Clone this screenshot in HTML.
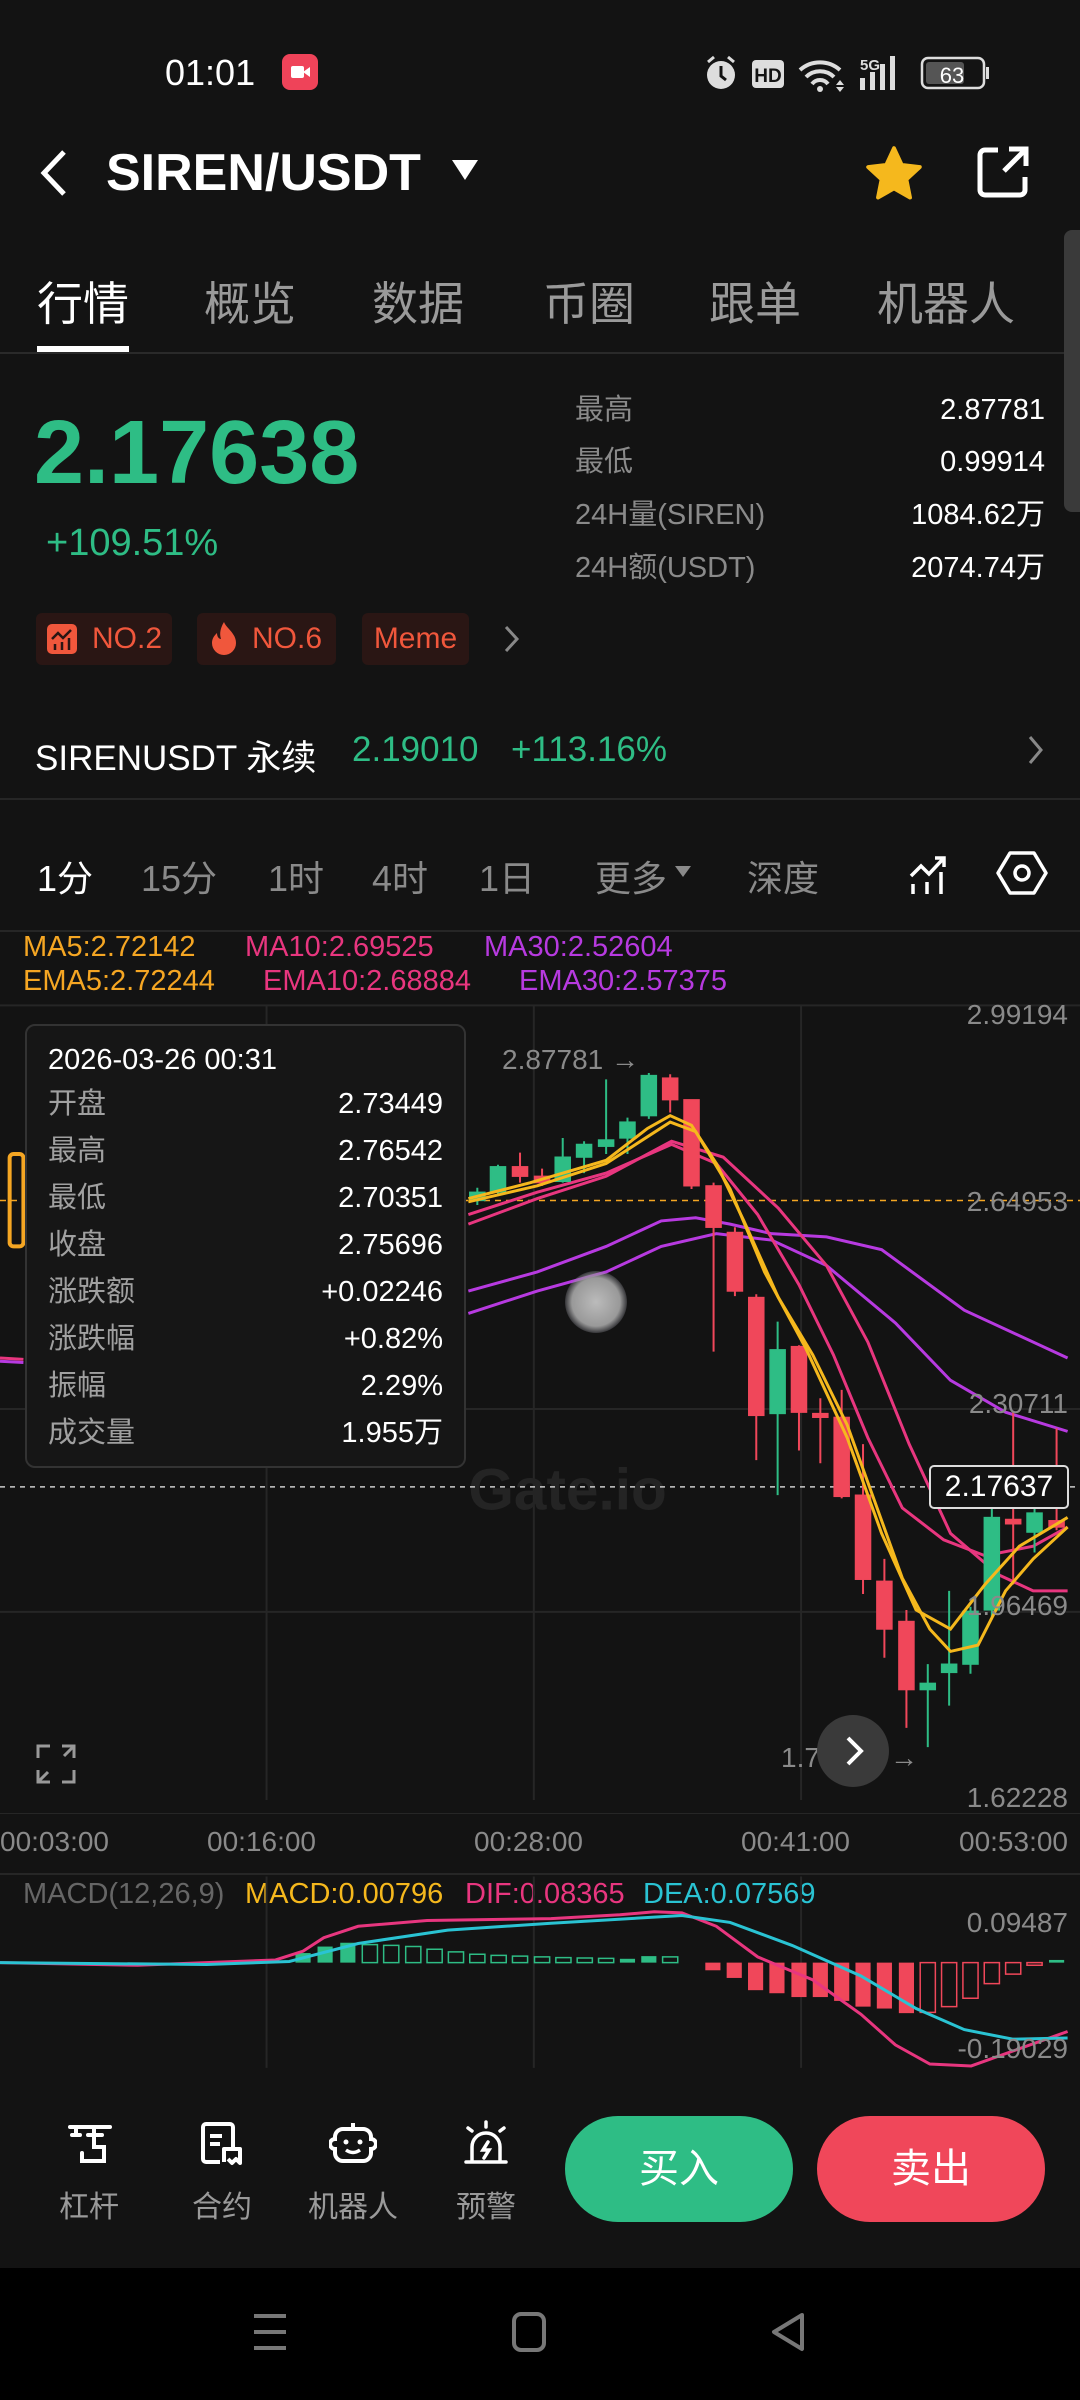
<!DOCTYPE html>
<html><head><meta charset="utf-8">
<style>
*{margin:0;padding:0;box-sizing:border-box}
body{width:1080px;height:2400px;background:#131313;position:relative;overflow:hidden;font-family:"Liberation Sans","Noto Sans CJK SC",sans-serif;color:#fff}
.a{position:absolute;white-space:nowrap}
.g{color:#2ebd85}.gr{color:#8a8a8a}
.tab{position:absolute;top:268px;font-size:46px;color:#9a9a9a}
.lab{position:absolute;left:575px;font-size:29px;color:#8a8a8a;line-height:36px}
.val{position:absolute;right:35px;font-size:29px;color:#fff;text-align:right;line-height:36px}
.tag{position:absolute;top:613px;height:52px;background:#2a1614;border-radius:6px;color:#f0573c;font-size:30px;line-height:52px}
.tf{position:absolute;top:850px;font-size:36px;color:#8a8a8a}
.tt{position:absolute;font-size:29px;color:#a0a0a0;line-height:36px}
.tv{position:absolute;right:0;font-size:29px;color:#fff;line-height:36px}
.ax{position:absolute;font-size:28px;color:#8a8a8a}
.bl{position:absolute;top:2182px;font-size:30px;color:#9a9a9a;width:120px;text-align:center}
</style></head><body>
<!-- status -->
<div class="a" style="left:165px;top:52px;font-size:36px">01:01</div>
<div class="a" style="left:282px;top:54px;width:36px;height:36px;background:#ef4359;border-radius:8px"><div style="position:absolute;left:9px;top:12px;width:13px;height:12px;background:#fff;border-radius:2px"></div><div style="position:absolute;left:21px;top:13px;width:0;height:0;border-top:5px solid transparent;border-bottom:5px solid transparent;border-right:7px solid #fff"></div></div>
<svg class="a" style="left:700px;top:54px" width="300" height="38" viewBox="0 0 300 38">
<circle cx="21" cy="21" r="14" fill="#ddd"/><path d="M21 12v10l5 4" stroke="#131313" stroke-width="3" fill="none"/><path d="M8 8l6-5M34 8l-6-5" stroke="#ddd" stroke-width="3"/>
<rect x="52" y="6" width="32" height="28" rx="4" fill="#ddd"/><text x="68" y="28" font-size="19" font-weight="bold" fill="#131313" text-anchor="middle" font-family="Liberation Sans">HD</text>
<path d="M100 16a30 30 0 0 1 40 0M106 23a20 20 0 0 1 28 0M112 30a10 10 0 0 1 16 0" stroke="#ddd" stroke-width="4" fill="none"/><circle cx="120" cy="35" r="3" fill="#ddd"/><path d="M140 26l4 5h-8zM140 38l4-5h-8z" fill="#ddd"/>
<text x="160" y="16" font-size="15" font-weight="bold" fill="#ddd" font-family="Liberation Sans">5G</text>
<rect x="160" y="24" width="5" height="12" fill="#ddd"/><rect x="170" y="18" width="5" height="18" fill="#ddd"/><rect x="180" y="10" width="5" height="26" fill="#ddd"/><rect x="190" y="2" width="5" height="34" fill="#ddd"/>
<rect x="222" y="4" width="62" height="30" rx="6" stroke="#ddd" stroke-width="2.5" fill="none"/><rect x="226" y="8" width="38" height="22" rx="3" fill="#555"/><rect x="286" y="13" width="3" height="12" fill="#ddd"/>
<text x="252" y="29" font-size="22" fill="#fff" text-anchor="middle" font-family="Liberation Sans">63</text></svg>
<!-- header -->
<svg class="a" style="left:36px;top:148px" width="34" height="50"><path d="M28 4L8 25l20 21" stroke="#fff" stroke-width="5" fill="none"/></svg>
<div class="a" style="left:106px;top:143px;font-size:52px;font-weight:bold">SIREN/USDT</div>
<div class="a" style="left:452px;top:160px;width:0;height:0;border-left:13px solid transparent;border-right:13px solid transparent;border-top:20px solid #fff"></div>
<svg class="a" style="left:862px;top:143px" width="64" height="62" viewBox="0 0 24 24"><path d="M12 2l3 6.5 7 .8-5.2 4.8 1.4 7L12 17.6 5.8 21.1l1.4-7L2 9.3l7-.8z" fill="#f5b81d" stroke="#f5b81d" stroke-linejoin="round" stroke-width="1.5"/></svg>
<svg class="a" style="left:976px;top:145px" width="54" height="54" viewBox="0 0 54 54"><path d="M22 5H9a5 5 0 0 0-5 5v35a5 5 0 0 0 5 5h35a5 5 0 0 0 5-5V32" stroke="#fff" stroke-width="5" fill="none"/><path d="M28 26L49 5M33 4h17v17" stroke="#fff" stroke-width="5" fill="none"/></svg>
<!-- tabs -->
<div class="tab" style="left:37px;color:#fff">行情</div>
<div class="tab" style="left:204px">概览</div>
<div class="tab" style="left:372px">数据</div>
<div class="tab" style="left:543px">币圈</div>
<div class="tab" style="left:709px">跟单</div>
<div class="tab" style="left:877px">机器人</div>
<div class="a" style="left:37px;top:346px;width:92px;height:6px;background:#fff"></div>
<div class="a" style="left:0;top:352px;width:1080px;height:2px;background:#2a2a2a"></div>
<div class="a" style="left:1064px;top:230px;width:16px;height:282px;background:#3a3a3a;border-radius:8px 0 0 8px"></div>
<!-- price -->
<div class="a g" style="left:34px;top:402px;font-size:90px;font-weight:bold">2.17638</div>
<div class="a g" style="left:46px;top:522px;font-size:38px">+109.51%</div>
<div class="lab" style="top:392px">最高</div><div class="val" style="top:392px">2.87781</div>
<div class="lab" style="top:444px">最低</div><div class="val" style="top:444px">0.99914</div>
<div class="lab" style="top:497px">24H量(SIREN)</div><div class="val" style="top:497px">1084.62万</div>
<div class="lab" style="top:550px">24H额(USDT)</div><div class="val" style="top:550px">2074.74万</div>
<div class="tag" style="left:36px;width:136px"><svg style="position:absolute;left:11px;top:11px" width="30" height="30" viewBox="0 0 30 30"><rect width="30" height="30" rx="5" fill="#f0573c"/><path d="M5 15l6-6 5 5 8-8M8 20v6M15 18v8M22 14v12" stroke="#2a1614" stroke-width="2.5" fill="none"/></svg><span style="position:absolute;left:56px">NO.2</span></div>
<div class="tag" style="left:197px;width:139px"><svg style="position:absolute;left:14px;top:9px" width="26" height="34" viewBox="0 0 26 34"><path d="M13 0c2 6 12 11 12 21a12 12 0 0 1-24 0c0-5 3-8 5-10 0 4 2 6 4 6-2-6 0-12 3-17z" fill="#f0573c"/></svg><span style="position:absolute;left:55px">NO.6</span></div>
<div class="tag" style="left:362px;width:107px;text-align:center">Meme</div>
<svg class="a" style="left:502px;top:624px" width="20" height="30"><path d="M4 3l11 12L4 27" stroke="#888" stroke-width="3" fill="none"/></svg>
<div class="a" style="left:35px;top:730px;font-size:35px">SIRENUSDT 永续</div>
<div class="a g" style="left:352px;top:730px;font-size:35px">2.19010</div>
<div class="a g" style="left:511px;top:730px;font-size:35px">+113.16%</div>
<svg class="a" style="left:1026px;top:734px" width="20" height="32"><path d="M4 3l11 13L4 29" stroke="#888" stroke-width="3" fill="none"/></svg>
<div class="a" style="left:0;top:798px;width:1080px;height:2px;background:#262626"></div>
<!-- timeframes -->
<div class="tf" style="left:37px;color:#fff">1分</div>
<div class="tf" style="left:141px">15分</div>
<div class="tf" style="left:268px">1时</div>
<div class="tf" style="left:372px">4时</div>
<div class="tf" style="left:479px">1日</div>
<div class="tf" style="left:595px">更多</div>
<div class="a" style="left:675px;top:866px;border-left:8px solid transparent;border-right:8px solid transparent;border-top:11px solid #8a8a8a"></div>
<div class="tf" style="left:747px">深度</div>
<svg class="a" style="left:908px;top:852px" width="44" height="44" viewBox="0 0 44 44"><path d="M3 24l10-10 8 8 14-15M27 6h9v9" stroke="#fff" stroke-width="3.5" fill="none"/><path d="M5 32v10M19 30v12M33 20v22" stroke="#fff" stroke-width="3.5"/></svg>
<svg class="a" style="left:996px;top:850px" width="52" height="46" viewBox="0 0 52 46"><path d="M14 3h24l12 20-12 20H14L2 23z" stroke="#fff" stroke-width="3.5" fill="none" stroke-linejoin="round"/><circle cx="26" cy="23" r="7" stroke="#fff" stroke-width="3.5" fill="none"/></svg>
<div class="a" style="left:0;top:930px;width:1080px;height:2px;background:#262626"></div>
<!-- MA -->
<div class="a" style="left:23px;top:931px;font-size:29px;color:#f5a623">MA5:2.72142</div>
<div class="a" style="left:245px;top:931px;font-size:29px;color:#e8367f">MA10:2.69525</div>
<div class="a" style="left:484px;top:931px;font-size:29px;color:#b73ae0">MA30:2.52604</div>
<div class="a" style="left:23px;top:965px;font-size:29px;color:#f5a623">EMA5:2.72244</div>
<div class="a" style="left:263px;top:965px;font-size:29px;color:#e8367f">EMA10:2.68884</div>
<div class="a" style="left:519px;top:965px;font-size:29px;color:#b73ae0">EMA30:2.57375</div>
<!-- chart -->
<svg class="a" style="left:0;top:800px" width="1080" height="1000" viewBox="0 0 1568 1568" preserveAspectRatio="none">
<path d="M0 322H1568M0 955H1568M0 1273H1568M387 322V1568M775 322V1568M1163 322V1568" stroke="#262626" stroke-width="2" fill="none" vector-effect="non-scaling-stroke"/>
<text x="680" y="1030" font-size="85" font-weight="bold" fill="#242424" font-family="Liberation Sans" transform="scale(1,1.08)">Gate.io</text>
<path d="M0 628H1568" stroke="#f5a623" stroke-width="1.5" stroke-dasharray="6 5" vector-effect="non-scaling-stroke"/>
<path d="M0 1077H1568" stroke="#ccc" stroke-width="1.5" stroke-dasharray="5 5" vector-effect="non-scaling-stroke"/>
<g fill="none">
<path vector-effect="non-scaling-stroke" stroke="#b73ae0" stroke-width="3" d="M680 770L780 740 880 700 960 660 1010 655 1060 665 1120 680 1200 685 1280 705 1400 800 1550 875"/>
<path vector-effect="non-scaling-stroke" stroke="#b73ae0" stroke-width="3" d="M680 805L780 770 880 740 960 700 1040 680 1120 690 1200 730 1300 820 1380 910 1460 960 1550 990"/>
<path vector-effect="non-scaling-stroke" stroke="#e8367f" stroke-width="3" d="M680 650L780 615 880 585 975 540 1040 570 1100 650 1160 760 1210 870 1260 1000 1310 1110 1370 1160 1430 1185 1500 1170 1550 1140"/>
<path vector-effect="non-scaling-stroke" stroke="#e8367f" stroke-width="3" d="M680 665L780 625 880 590 975 535 1050 560 1130 640 1200 730 1260 850 1320 1010 1380 1150 1450 1215 1500 1240 1550 1240"/>
</g>
<g fill="#2ebd85" stroke="#2ebd85" stroke-width="2">
<path vector-effect="non-scaling-stroke" d="M693 608V635M723 572V618M817 530V600M848 535V585M880 438V555M911 498V555M942 428V500M1129 818V1090M1347 1355V1485M1378 1240V1420M1409 1265V1370M1440 1110V1285M1502 1110V1180"/>
<rect x="682" y="615" width="22" height="13"/><rect x="712" y="575" width="22" height="40"/><rect x="806" y="560" width="22" height="38"/><rect x="837" y="540" width="22" height="20"/><rect x="869" y="533" width="22" height="10"/><rect x="900" y="505" width="22" height="25"/><rect x="931" y="432" width="22" height="63"/><rect x="1118" y="862" width="22" height="100"/><rect x="1336" y="1385" width="22" height="10"/><rect x="1367" y="1355" width="22" height="13"/><rect x="1398" y="1272" width="22" height="83"/><rect x="1429" y="1125" width="22" height="145"/><rect x="1491" y="1118" width="22" height="30"/>
</g>
<g fill="#f0475a" stroke="#f0475a" stroke-width="2">
<path vector-effect="non-scaling-stroke" d="M755 553V600M787 578V605M973 430V490M1004 470V610M1036 600V865M1067 670V778M1098 775V1035M1160 855V1020M1191 938V1040M1222 925V1095M1253 1010V1245M1284 1190V1345M1316 1270V1455M1471 960V1230M1534 985V1145"/>
<rect x="744" y="575" width="22" height="15"/><rect x="776" y="590" width="22" height="10"/><rect x="962" y="436" width="22" height="34"/><rect x="993" y="470" width="22" height="135"/><rect x="1025" y="605" width="22" height="65"/><rect x="1056" y="678" width="22" height="92"/><rect x="1087" y="780" width="22" height="185"/><rect x="1149" y="857" width="22" height="103"/><rect x="1180" y="962" width="22" height="6"/><rect x="1211" y="968" width="22" height="124"/><rect x="1242" y="1090" width="22" height="132"/><rect x="1273" y="1225" width="22" height="75"/><rect x="1305" y="1288" width="22" height="107"/><rect x="1460" y="1128" width="22" height="7"/><rect x="1523" y="1130" width="22" height="10"/>
</g>
<g fill="none" stroke="#f5b81d" stroke-width="3">
<path vector-effect="non-scaling-stroke" d="M680 625L770 600 880 565 940 515 973 495 1004 510 1040 570 1080 660 1130 780 1180 870 1230 980 1270 1100 1310 1220 1350 1300 1380 1335 1420 1325 1460 1240 1500 1190 1550 1140"/>
<path vector-effect="non-scaling-stroke" d="M680 630L780 605 880 570 973 505 1010 520 1060 610 1110 740 1170 860 1230 1000 1280 1150 1330 1270 1380 1300 1430 1230 1480 1170 1550 1125"/>
</g>
<path vector-effect="non-scaling-stroke" d="M0 880L34 882" stroke="#b73ae0" stroke-width="3"/>
<path vector-effect="non-scaling-stroke" d="M0 875L34 877" stroke="#e8367f" stroke-width="3"/>
<rect x="14" y="555" width="20" height="145" rx="6" fill="none" stroke="#f5a623" stroke-width="4" vector-effect="non-scaling-stroke"/>
</svg>
<div class="a" style="left:565px;top:1271px;width:62px;height:62px;border-radius:50%;background:radial-gradient(circle,#bbb 0,#999 55%,rgba(150,150,160,.3) 70%,rgba(0,0,0,0) 75%)"></div>
<div class="ax" style="right:12px;top:999px">2.99194</div>
<div class="ax" style="right:12px;top:1186px">2.64953</div>
<div class="ax" style="right:12px;top:1388px">2.30711</div>
<div class="ax" style="right:12px;top:1590px">1.96469</div>
<div class="ax" style="right:12px;top:1782px">1.62228</div>
<div class="ax" style="left:502px;top:1044px">2.87781 →</div>
<div class="ax" style="left:781px;top:1742px">1.7&nbsp;&nbsp;&nbsp;&nbsp;&nbsp;&nbsp;1 →</div>
<div class="a" style="left:929px;top:1465px;width:140px;height:44px;border:2px solid #ddd;border-radius:5px;background:#131313;font-size:30px;text-align:center;line-height:40px">2.17637</div>
<div class="a" style="left:817px;top:1715px;width:72px;height:72px;border-radius:50%;background:#3a3a3a"><svg width="72" height="72"><path d="M31 23l13 13-13 13" stroke="#fff" stroke-width="4" fill="none"/></svg></div>
<svg class="a" style="left:36px;top:1744px" width="40" height="40"><path d="M2 14V2h12M26 2h12v12M38 26v12H26M14 38H2V26M2 38l10-10M38 2L28 12" stroke="#999" stroke-width="3" fill="none"/></svg>
<!-- tooltip -->
<div class="a" style="left:25px;top:1024px;width:441px;height:444px;background:#161616;border:2px solid #333;border-radius:10px">
<div class="a" style="left:21px;top:16px;font-size:29px;color:#fff;line-height:36px">2026-03-26 00:31</div>
<div style="position:absolute;left:21px;right:21px;top:60px;height:380px">
<div class="tt" style="top:0">开盘</div><div class="tv" style="top:0">2.73449</div>
<div class="tt" style="top:47px">最高</div><div class="tv" style="top:47px">2.76542</div>
<div class="tt" style="top:94px">最低</div><div class="tv" style="top:94px">2.70351</div>
<div class="tt" style="top:141px">收盘</div><div class="tv" style="top:141px">2.75696</div>
<div class="tt" style="top:188px">涨跌额</div><div class="tv g" style="top:188px">+0.02246</div>
<div class="tt" style="top:235px">涨跌幅</div><div class="tv g" style="top:235px">+0.82%</div>
<div class="tt" style="top:282px">振幅</div><div class="tv" style="top:282px">2.29%</div>
<div class="tt" style="top:329px">成交量</div><div class="tv" style="top:329px">1.955万</div>
</div></div>
<div class="a" style="left:0;top:1813px;width:1080px;height:1px;background:#262626"></div>
<div class="ax" style="left:0;top:1826px">00:03:00</div>
<div class="ax" style="left:207px;top:1826px">00:16:00</div>
<div class="ax" style="left:474px;top:1826px">00:28:00</div>
<div class="ax" style="left:741px;top:1826px">00:41:00</div>
<div class="ax" style="right:12px;top:1826px">00:53:00</div>
<div class="a" style="left:0;top:1873px;width:1080px;height:2px;background:#262626"></div>
<div class="a" style="left:23px;top:1878px;font-size:29px;color:#666">MACD(12,26,9)</div>
<div class="a" style="left:245px;top:1878px;font-size:29px;color:#f5b81d">MACD:0.00796</div>
<div class="a" style="left:465px;top:1878px;font-size:29px;color:#e8367f">DIF:0.08365</div>
<div class="a" style="left:643px;top:1878px;font-size:29px;color:#2ac3d3">DEA:0.07569</div>
<svg class="a" style="left:0;top:1800px" width="1080" height="600" viewBox="0 0 1568 1568" preserveAspectRatio="none">
<path vector-effect="non-scaling-stroke" d="M387 200V700M775 200V700M1163 200V700" stroke="#262626" stroke-width="2"/>
<g fill="#2ebd85"><rect x="429" y="400" width="22" height="25"/><rect x="461" y="383" width="22" height="42"/><rect x="494" y="373" width="22" height="52"/><rect x="900" y="415" width="22" height="10"/><rect x="931" y="408" width="22" height="17"/><rect x="1523" y="418" width="22" height="7"/></g>
<g fill="none" stroke="#2ebd85" stroke-width="1.5">
<path vector-effect="non-scaling-stroke" d="M526 378h22v47h-22zM557 380h22v45h-22zM589 383h22v42h-22zM620 390h22v35h-22zM651 397h22v28h-22zM682 403h22v22h-22zM713 406h22v19h-22zM744 408h22v17h-22zM776 410h22v15h-22zM807 412h22v13h-22zM838 413h22v12h-22zM869 414h22v11h-22zM962 410h22v15h-22z"/></g>
<g fill="#f0475a"><rect x="1024" y="425" width="22" height="20"/><rect x="1055" y="425" width="22" height="40"/><rect x="1086" y="425" width="22" height="72"/><rect x="1117" y="425" width="22" height="80"/><rect x="1149" y="425" width="22" height="90"/><rect x="1180" y="425" width="22" height="90"/><rect x="1211" y="425" width="22" height="100"/><rect x="1242" y="425" width="22" height="115"/><rect x="1273" y="425" width="22" height="120"/><rect x="1305" y="425" width="22" height="132"/></g>
<g fill="none" stroke="#f0475a" stroke-width="1.5"><path vector-effect="non-scaling-stroke" d="M1336 425h22v130h-22zM1367 425h22v115h-22zM1398 425h22v93h-22zM1429 425h22v55h-22zM1460 425h22v30h-22zM1491 425h22v7h-22z"/></g>
<path vector-effect="non-scaling-stroke" fill="none" stroke="#e8367f" stroke-width="3" d="M0 425L200 432 400 418 440 395 470 360 520 330 620 315 800 310 900 300 950 292 990 295 1040 330 1100 410 1180 470 1250 560 1300 640 1350 690 1410 695 1480 650 1550 605"/>
<path vector-effect="non-scaling-stroke" fill="none" stroke="#2ac3d3" stroke-width="3" d="M0 425L300 430 420 422 520 375 650 340 800 322 990 302 1060 320 1150 380 1250 460 1330 545 1400 600 1470 625 1550 622"/>
</svg>
<div class="ax" style="right:12px;top:1907px">0.09487</div>
<div class="ax" style="right:12px;top:2033px">-0.19029</div>
<!-- bottom bar -->
<svg class="a" style="left:68px;top:2123px" width="44" height="42" viewBox="0 0 44 42"><path d="M2 4h40M8 4v8M4 12h8M26 4v8M20 12h14M26 12v12h10v14H14v-8" stroke="#fff" stroke-width="4" fill="none" stroke-linecap="round"/></svg>
<svg class="a" style="left:200px;top:2122px" width="44" height="44" viewBox="0 0 44 44"><path d="M20 40H6a3 3 0 0 1-3-3V5a3 3 0 0 1 3-3h24a3 3 0 0 1 3 3v22M10 14h12M10 22h10M24 40V27h16v14l-4-4-4 4-4-4" stroke="#fff" stroke-width="4" fill="none" stroke-linejoin="round"/></svg>
<svg class="a" style="left:329px;top:2121px" width="48" height="46" viewBox="0 0 48 46"><path d="M24 2v6M14 8h20a8 8 0 0 1 8 8v2a4 4 0 0 1 0 10v4a8 8 0 0 1-8 8H14a8 8 0 0 1-8-8v-4a4 4 0 0 1 0-10v-2a8 8 0 0 1 8-8z" stroke="#fff" stroke-width="4" fill="none"/><circle cx="17" cy="21" r="2.5" fill="#fff"/><circle cx="31" cy="21" r="2.5" fill="#fff"/><path d="M17 29q7 5 14 0" stroke="#fff" stroke-width="3.5" fill="none"/></svg>
<svg class="a" style="left:463px;top:2120px" width="46" height="46" viewBox="0 0 46 46"><path d="M23 2v5M5 8l4 3M41 8l-4 3M3 42h40M9 42V27a14 14 0 0 1 28 0v15M25 22l-5 8h6l-5 8" stroke="#fff" stroke-width="3.5" fill="none" stroke-linecap="round"/></svg>
<div class="bl" style="left:29px">杠杆</div>
<div class="bl" style="left:162px">合约</div>
<div class="bl" style="left:293px">机器人</div>
<div class="bl" style="left:426px">预警</div>
<div class="a" style="left:565px;top:2116px;width:228px;height:106px;border-radius:53px;background:#2ebd85;font-size:40px;text-align:center;line-height:106px">买入</div>
<div class="a" style="left:817px;top:2116px;width:228px;height:106px;border-radius:53px;background:#f0475a;font-size:40px;text-align:center;line-height:106px">卖出</div>
<!-- nav -->
<div class="a" style="left:0;top:2268px;width:1080px;height:132px;background:#000"></div>
<svg class="a" style="left:250px;top:2312px" width="40" height="40"><path d="M4 4h32M4 20h32M4 36h32" stroke="#777" stroke-width="4"/></svg>
<svg class="a" style="left:510px;top:2312px" width="40" height="40"><rect x="4" y="2" width="30" height="36" rx="7" stroke="#777" stroke-width="4" fill="none"/></svg>
<svg class="a" style="left:768px;top:2312px" width="40" height="40"><path d="M34 3L6 20l28 17z" stroke="#777" stroke-width="4" fill="none" stroke-linejoin="round"/></svg>
</body></html>
